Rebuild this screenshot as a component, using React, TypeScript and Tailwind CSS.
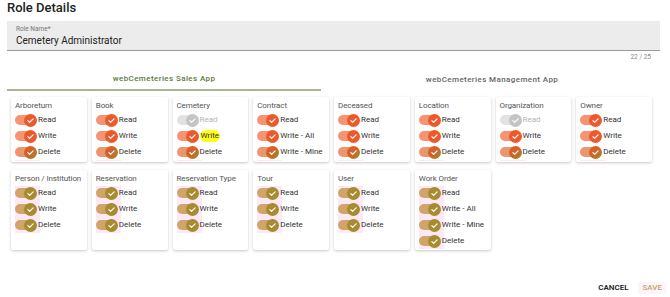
import React from "react";

type Tone = "orange" | "mixed" | "olive" | "off";

interface Perm {
  label: string;
  tone: Tone;
  mark?: boolean;
}

interface Group {
  title: string;
  perms: Perm[];
}

const rw = (t: Tone, last: Tone = "mixed"): Perm[] => [
  { label: "Read", tone: t },
  { label: "Write", tone: t },
  { label: "Delete", tone: last },
];

const salesRow: Group[] = [
  { title: "Arboretum", perms: rw("orange") },
  { title: "Book", perms: rw("orange") },
  {
    title: "Cemetery",
    perms: [
      { label: "Read", tone: "off" },
      { label: "Write", tone: "orange", mark: true },
      { label: "Delete", tone: "mixed" },
    ],
  },
  {
    title: "Contract",
    perms: [
      { label: "Read", tone: "orange" },
      { label: "Write - All", tone: "orange" },
      { label: "Write - Mine", tone: "mixed" },
    ],
  },
  { title: "Deceased", perms: rw("orange") },
  { title: "Location", perms: rw("orange") },
  {
    title: "Organization",
    perms: [
      { label: "Read", tone: "off" },
      { label: "Write", tone: "orange" },
      { label: "Delete", tone: "mixed" },
    ],
  },
  { title: "Owner", perms: rw("orange") },
];

const secondRow: Group[] = [
  { title: "Person / Institution", perms: rw("olive", "olive") },
  { title: "Reservation", perms: rw("olive", "olive") },
  { title: "Reservation Type", perms: rw("olive", "olive") },
  { title: "Tour", perms: rw("olive", "olive") },
  { title: "User", perms: rw("olive", "olive") },
  {
    title: "Work Order",
    perms: [
      { label: "Read", tone: "olive" },
      { label: "Write - All", tone: "olive" },
      { label: "Write - Mine", tone: "olive" },
      { label: "Delete", tone: "olive" },
    ],
  },
];

const trackCls: Record<Tone, string> = {
  orange: "bg-[#f79272]",
  mixed: "bg-gradient-to-r from-[#f49070] to-[#d4a468]",
  olive: "bg-[#cfa56a]",
  off: "bg-[#e2e2e2]",
};

const thumbCls: Record<Tone, string> = {
  orange: "bg-[#ec5a2c]",
  mixed: "bg-gradient-to-br from-[#e65a2a] via-[#d0622a] to-[#8f8a2e]",
  olive: "bg-[#a88b2f]",
  off: "bg-[#c4c4c4]",
};

const Toggle = ({ tone }: { tone: Tone }) => (
  <span className="relative flex h-[13px] w-[22px] shrink-0 items-center">
    <span className={`h-[10px] w-[20px] rounded-full ${trackCls[tone]}`} />
    <span
      className={`absolute right-0 top-0 flex h-[13px] w-[13px] items-center justify-center rounded-full ${thumbCls[tone]}`}
    >
      <svg width="9" height="9" viewBox="0 0 24 24" fill="none">
        <path
          d="M5 12.5l4.5 4.5L19 7.5"
          stroke="white"
          strokeWidth="3.2"
          strokeLinecap="round"
          strokeLinejoin="round"
        />
      </svg>
    </span>
  </span>
);

const Card = ({ g, pink }: { g: Group; pink?: boolean }) => (
  <div className="rounded-[2px] bg-white px-[4px] pb-[1px] pt-[3px] shadow-[0_1px_3px_rgba(0,0,0,0.22)]">
    <div className="h-[12px] whitespace-nowrap text-[8px] leading-[12px] tracking-[-0.1px] text-[#555]">
      {g.title}
    </div>
    <div className="relative">
      {pink && (
        <div className="absolute left-0 top-[1px] h-[calc(100%-1px)] w-[25px] bg-[#fce8f6]" />
      )}
      {g.perms.map((p) => (
        <div key={p.label} className="relative flex h-[16px] items-center gap-[1px]">
          <Toggle tone={p.tone} />
          <span
            className={`whitespace-nowrap text-[8px] leading-[12px] ${
              p.tone === "off" ? "text-[#b5b5b5]" : "text-[#333]"
            } ${p.mark ? "rounded-[6px] bg-[#ffff1a] px-[1px]" : ""}`}
          >
            {p.label}
          </span>
        </div>
      ))}
      {!pink && <div className="h-[1px] w-[25px] bg-[#fce8f6]" />}
    </div>
  </div>
);

export default function App() {
  return (
    <div
      className="h-[297px] w-[670px] overflow-hidden bg-white text-[#222]"
      style={{ fontFamily: "Roboto, 'Liberation Sans', sans-serif" }}
    >
      <h2 className="px-[7px] pt-[0px] text-[13px] font-medium leading-[15px] text-[#222]">Role Details</h2>

      <div className="mx-[7px] mt-[6px] h-[30px] w-[653px] border-b border-[#9a9a9a] bg-[#ececec] px-[9px] pt-[4px]">
        <div className="text-[6.5px] leading-[8px] text-[#777]">Role Name*</div>
        <div className="mt-[1px] text-[10px] leading-[13px] text-[#222]">Cemetery Administrator</div>
      </div>
      <div className="mr-[19px] mt-[2px] text-right text-[6.5px] leading-[9px] text-[#888]">22 / 25</div>

      <div className="ml-[7px] mt-[6px] flex w-[656px]">
        <div className="flex h-[23px] w-[314px] items-center justify-center border-b-2 border-[#a9b596] text-[8px] font-medium tracking-[0.4px] text-[#5d7a3e]">
          webCemeteries Sales App
        </div>
        <div className="flex h-[23px] flex-1 items-center justify-center text-[8px] font-medium tracking-[0.4px] text-[#666]">
          webCemeteries Management App
        </div>
      </div>

      <div className="ml-[11px] mt-[6px] grid w-[641px] grid-cols-8 gap-x-[5px] gap-y-[8px]">
        {salesRow.map((g) => (
          <Card key={g.title} g={g} />
        ))}
        {secondRow.map((g) => (
          <Card key={g.title} g={g} pink />
        ))}
      </div>

      <div className="mr-[4px] mt-[32px] flex items-center justify-end gap-[6px]">
        <button className="px-[4px] text-[8px] font-semibold text-[#222]">CANCEL</button>
        <button className="bg-[#fdf5fb] px-[4px] text-[8px] font-medium text-[#c9a266]">SAVE</button>
      </div>
    </div>
  );
}
